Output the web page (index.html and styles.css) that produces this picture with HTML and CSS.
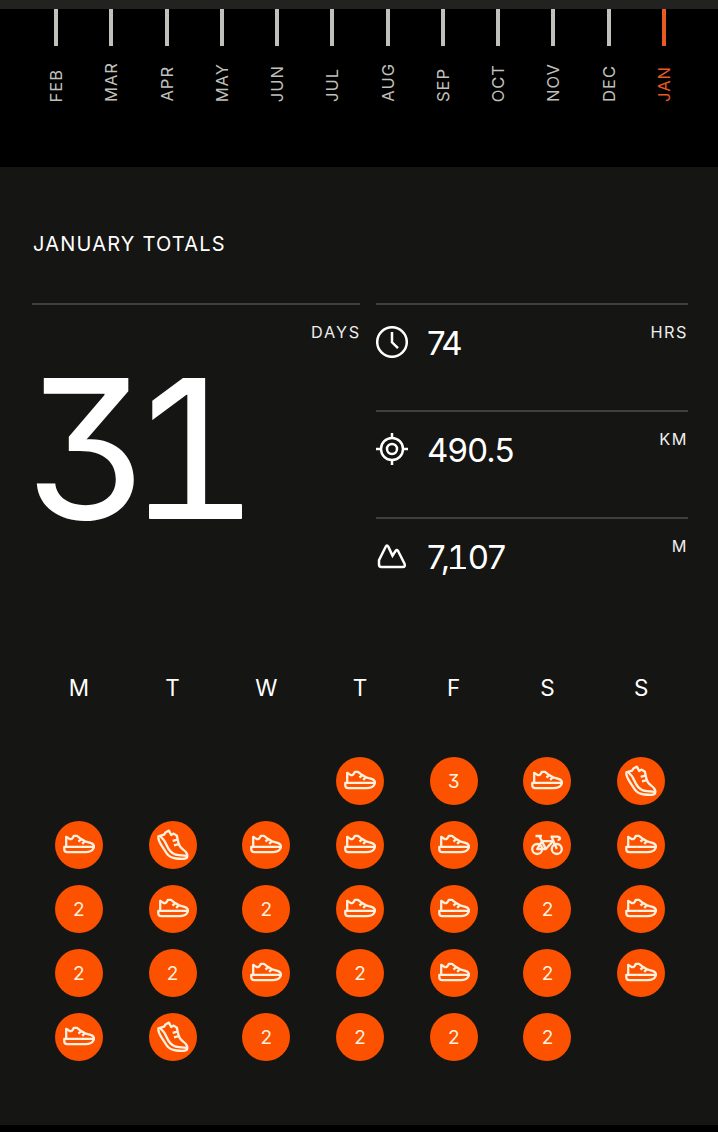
FILE: index.html
```html
<!DOCTYPE html>
<html lang="en">
<head>
<meta charset="utf-8">
<title>January Totals</title>
<link rel="stylesheet" href="styles.css">
</head>
<body>
<svg class="sprite" aria-hidden="true">
  <symbol id="shoe" viewBox="0 0 32 32">
    <path d="M3.2 17.2V7.8L6.4 9.9C8.2 10.6 9.9 9.6 10.8 6.9H14L18.2 10.1L22.1 12.3L27.5 13.8C30.5 14.6 31.6 17 30.6 19.1C29.3 22 26.4 23.1 22.5 23.1H4.2C2.3 23.1 1.3 22 1.3 20.2V17.9H23.5C26.5 17.9 28.5 18.1 30.8 17.8"/>
    <path d="M18.4 10.1L15.4 12.5M21.8 12.1L19.2 14.9"/>
  </symbol>
  <symbol id="runner" viewBox="0 0 32 32">
    <path d="M1.4 7.4C0.9 10.2 2.6 13.5 4.8 16.9L9.7 24.3C11.9 27.6 15.3 29 19.4 29.5C23.7 30.1 28.8 30.6 30 28.4C31.2 26 29.1 22.6 26.5 20.9C24 19.1 21.9 16.2 21.4 13.8L19.9 6.7L16.7 4.6L14.2 6L11.9 1.6L8.5 3.5L7.1 5.6L1.4 7.4Z"/>
    <path d="M3.4 7.4C4.7 9.1 6.6 9.9 7.7 12.4L11.3 19.4C13.7 23.9 17.5 25.9 22.2 26.2L30 26.9M20.3 10.6L15.7 11.8M21.7 15.2L17 16.4"/>
  </symbol>
  <symbol id="bike" viewBox="0 0 32 32">
    <circle cx="6.2" cy="20" r="5"/><circle cx="25.8" cy="20" r="5"/>
    <path d="M4.5 7H11M8.2 7.2L11 12.2L14.8 20H6.2L11 12.2H22L15 19.8M25.8 20L20.5 7.6H26.2C29.6 7.6 30 11 26.6 11"/>
  </symbol>
</svg>

<div class="top-edge"></div>
<section class="months">
  <div class="month"><span>FEB</span></div><div class="month"><span>MAR</span></div><div class="month"><span>APR</span></div>
  <div class="month"><span>MAY</span></div><div class="month"><span>JUN</span></div><div class="month"><span>JUL</span></div>
  <div class="month"><span>AUG</span></div><div class="month"><span>SEP</span></div><div class="month"><span>OCT</span></div>
  <div class="month"><span>NOV</span></div><div class="month"><span>DEC</span></div><div class="month current"><span>JAN</span></div>
</section>

<main class="panel">
  <h1 class="title">JANUARY TOTALS</h1>
  <section class="totals">
    <div class="days">
      <div class="unit">DAYS</div>
      <div class="count">3<span class="one">1</span></div>
    </div>
    <div class="stats">
      <div class="stat">
        <svg class="stat-icon" viewBox="0 0 32 32"><circle cx="16" cy="16" r="14.8"/><path d="M16 6V16.3L22 22.2"/></svg>
        <span class="value tight">74</span><span class="unit">HRS</span>
      </div>
      <div class="stat">
        <svg class="stat-icon" viewBox="0 0 32 32"><circle cx="16" cy="16" r="11"/><circle cx="16" cy="16" r="5"/><path d="M16 0V5M16 27V32M0 16H5M27 16H32"/></svg>
        <span class="value">490.5</span><span class="unit">KM</span>
      </div>
      <div class="stat">
        <svg class="stat-icon" viewBox="0 0 32 32"><path d="M3.1 20L9.7 6.7Q10.9 4.4 12.3 6.7L16.5 15.6L19.7 10.7Q20.9 9 22.1 11L28.4 23.5Q29.8 27 26.7 27H5.4Q3 27 3 24.5V21Q3 20.4 3.1 20Z"/></svg>
        <span class="value">7,<span class="one">1</span>07</span><span class="unit">M</span>
      </div>
    </div>
  </section>

  <section class="calendar">
    <div class="weekday">M</div><div class="weekday">T</div><div class="weekday">W</div><div class="weekday">T</div><div class="weekday">F</div><div class="weekday">S</div><div class="weekday">S</div>

    <div class="day first"><svg><use href="#shoe"/></svg></div>
    <div class="day"><span>3</span></div>
    <div class="day"><svg><use href="#shoe"/></svg></div>
    <div class="day"><svg><use href="#runner"/></svg></div>

    <div class="day"><svg><use href="#shoe"/></svg></div>
    <div class="day"><svg><use href="#runner"/></svg></div>
    <div class="day"><svg><use href="#shoe"/></svg></div>
    <div class="day"><svg><use href="#shoe"/></svg></div>
    <div class="day"><svg><use href="#shoe"/></svg></div>
    <div class="day"><svg><use href="#bike"/></svg></div>
    <div class="day"><svg><use href="#shoe"/></svg></div>

    <div class="day"><span>2</span></div>
    <div class="day"><svg><use href="#shoe"/></svg></div>
    <div class="day"><span>2</span></div>
    <div class="day"><svg><use href="#shoe"/></svg></div>
    <div class="day"><svg><use href="#shoe"/></svg></div>
    <div class="day"><span>2</span></div>
    <div class="day"><svg><use href="#shoe"/></svg></div>

    <div class="day"><span>2</span></div>
    <div class="day"><span>2</span></div>
    <div class="day"><svg><use href="#shoe"/></svg></div>
    <div class="day"><span>2</span></div>
    <div class="day"><svg><use href="#shoe"/></svg></div>
    <div class="day"><span>2</span></div>
    <div class="day"><svg><use href="#shoe"/></svg></div>

    <div class="day"><svg><use href="#shoe"/></svg></div>
    <div class="day"><svg><use href="#runner"/></svg></div>
    <div class="day"><span>2</span></div>
    <div class="day"><span>2</span></div>
    <div class="day"><span>2</span></div>
    <div class="day"><span>2</span></div>
  </section>
</main>
</body>
</html>
```

FILE: styles.css
```css
* { box-sizing: border-box; }
body {
  margin: 0;
  height: 1132px;
  overflow: hidden;
  background: #000;
  color: #fff;
  font-family: Inter, "Liberation Sans", sans-serif;
  font-feature-settings: "cv09" 1;
}
.sprite { display: none; }
.top-edge { height: 9px; background: #222220; }

.months {
  display: grid;
  grid-template-columns: repeat(12, 1fr);
  height: 158px;
  padding: 0 26.4px 0 28.4px;
}
.month {
  display: flex;
  flex-direction: column;
  justify-content: space-between;
  align-items: center;
  height: 93px;
  color: #c0c0bc;
}
.month::before {
  content: "";
  width: 4px;
  height: 37px;
  background: currentColor;
}
.month span {
  writing-mode: vertical-rl;
  transform: rotate(180deg);
  line-height: 20px;
  font-size: 16.5px;
  letter-spacing: 1px;
}
.current { color: #e85a22; }

.panel {
  height: 958px;
  padding: 65px 30px 0 32px;
  background: #151513;
}
.title {
  margin: 0;
  height: 71px;
  padding-left: 1px;
  font-size: 20px;
  font-weight: 400;
  line-height: 24px;
  letter-spacing: 1.2px;
}
.totals {
  display: grid;
  grid-template-columns: 328px 312px;
  gap: 16px;
  height: 363px;
}
.days, .stat { border-top: 2px solid #3f3f3d; }
.unit {
  padding-top: 17px;
  font-size: 16.3px;
  line-height: 20px;
  letter-spacing: 1.5px;
  text-align: right;
  color: #eee;
}
.days .unit { margin-right: -1px; letter-spacing: 1.8px; }
.count {
  display: flex;
  align-items: baseline;
  margin: 7px 0 0 -7px;
  font-size: 194px;
  line-height: 200px;
}

/* footed numeral one */
.one {
  position: relative;
  display: inline-block;
  line-height: 1;
}
.one::after {
  content: "";
  position: absolute;
  left: 0.031em;
  bottom: 0.137em;
  width: 0.48em;
  height: 0.08em;
  border-radius: 0.005em;
  background: currentColor;
}
.count .one { margin-left: -2px; }
.value .one { margin-right: 6px; }

.stat { display: flex; height: 107px; }
.stat-icon {
  width: 32px;
  height: 32px;
  margin: 21px 19px 0 0;
  fill: none;
  stroke: #fff;
  stroke-width: 2.5;
}
.value {
  flex: 1;
  padding-top: 18px;
  font-size: 33px;
  line-height: 40px;
  letter-spacing: -0.8px;
}
.tight { letter-spacing: -2.5px; }

.calendar {
  display: grid;
  grid-template-columns: repeat(7, 1fr);
  grid-template-rows: 68px repeat(5, 48px);
  row-gap: 16px;
  width: 656px;
  padding-top: 7px;
  justify-items: center;
}
.weekday {
  font-size: 22.5px;
  line-height: 30px;
}
.day {
  display: flex;
  align-items: center;
  justify-content: center;
  width: 48px;
  height: 48px;
  border-radius: 50%;
  background: #fc5200;
  color: #fff1de;
  font-size: 19px;
  line-height: 26px;
}
.day span { padding-top: 2px; }
.first { grid-column: 4; }
.day svg {
  width: 32px;
  height: 32px;
  fill: none;
  stroke: #fff1de;
  stroke-width: 2.3;
  stroke-linejoin: round;
}
```
